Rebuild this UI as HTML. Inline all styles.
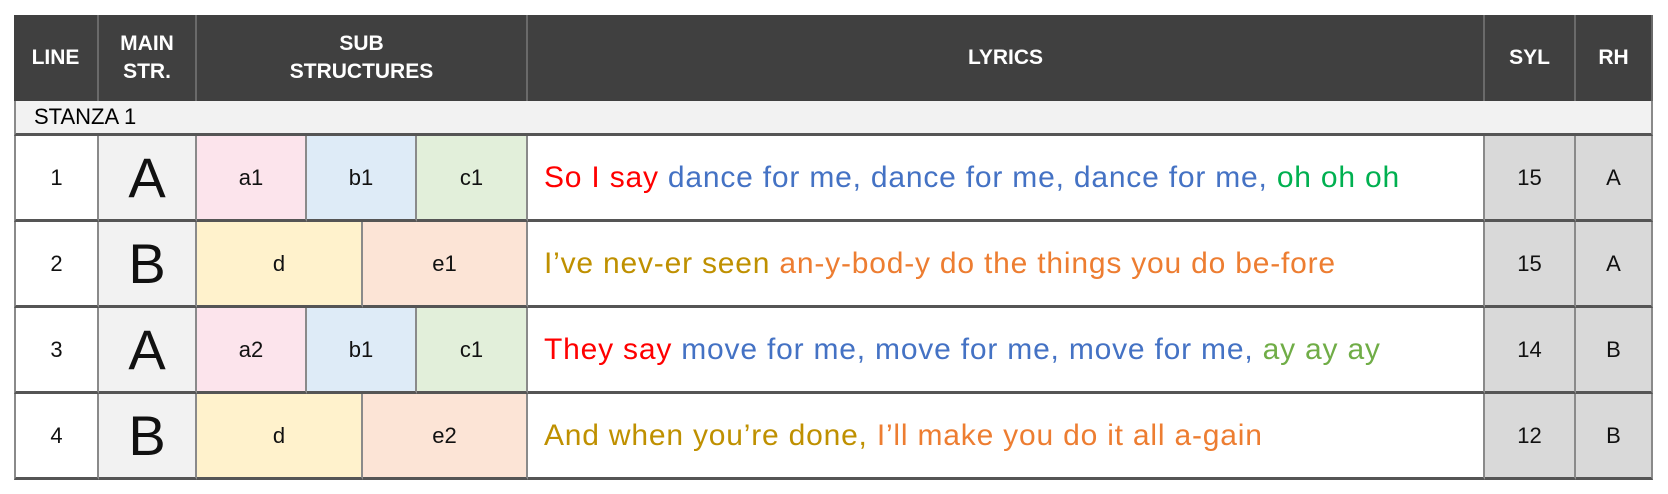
<!DOCTYPE html>
<html><head><meta charset="utf-8"><style>
body{margin:0;width:1668px;height:494px;background:#fff;font-family:"Liberation Sans",sans-serif;position:relative;overflow:hidden}
.c{position:absolute;box-sizing:border-box;display:flex;align-items:center;justify-content:center;text-align:center}
.h{background:#404040;color:#fff;font-weight:bold;font-size:21px;line-height:28px;border-right:2px solid #6a6a6a}
.b{border-right:2px solid #8a8a8a;border-bottom:3px solid #555;font-size:22px;color:#111}
.big{font-size:56px}
.ly{justify-content:flex-start;padding-left:16px;font-size:30px;letter-spacing:0.8px;white-space:pre}
.r{color:#ff0000}.bl{color:#4472c4}.g{color:#00b050}.go{color:#bf9000}.o{color:#ed7d31}.lg{color:#70ad47}
</style></head><body>
<div class="c h" style="left:14px;top:15px;width:85px;height:86px">LINE</div>
<div class="c h" style="left:99px;top:15px;width:98px;height:86px">MAIN<br>STR.</div>
<div class="c h" style="left:197px;top:15px;width:331px;height:86px">SUB<br>STRUCTURES</div>
<div class="c h" style="left:528px;top:15px;width:957px;height:86px">LYRICS</div>
<div class="c h" style="left:1485px;top:15px;width:91px;height:86px">SYL</div>
<div class="c h" style="left:1576px;top:15px;width:77px;height:86px">RH</div>
<div class="c" style="left:14px;top:101px;width:1639px;height:35px;background:#f2f2f2;justify-content:flex-start;padding-left:18px;font-size:22px;border-bottom:3px solid #555;border-left:2px solid #8a8a8a;border-right:2px solid #8a8a8a">STANZA 1</div>

<div class="c b" style="left:14px;top:136px;width:85px;height:86px;border-left:2px solid #8a8a8a">1</div>
<div class="c b big" style="left:99px;top:136px;width:98px;height:86px;background:#f2f2f2">A</div>
<div class="c b" style="left:197px;top:136px;width:110px;height:86px;background:#fce4ec">a1</div>
<div class="c b" style="left:307px;top:136px;width:110px;height:86px;background:#deebf7">b1</div>
<div class="c b" style="left:417px;top:136px;width:111px;height:86px;background:#e2efda">c1</div>
<div class="c b ly" style="left:528px;top:136px;width:957px;height:86px"><span class="r">So I say </span><span class="bl">dance for me, dance for me, dance for me, </span><span class="g">oh oh oh</span></div>
<div class="c b" style="left:1485px;top:136px;width:91px;height:86px;background:#d9d9d9">15</div>
<div class="c b" style="left:1576px;top:136px;width:77px;height:86px;background:#d9d9d9">A</div>

<div class="c b" style="left:14px;top:222px;width:85px;height:86px;border-left:2px solid #8a8a8a">2</div>
<div class="c b big" style="left:99px;top:222px;width:98px;height:86px;background:#f2f2f2">B</div>
<div class="c b" style="left:197px;top:222px;width:166px;height:86px;background:#fff2cc">d</div>
<div class="c b" style="left:363px;top:222px;width:165px;height:86px;background:#fce4d6">e1</div>
<div class="c b ly" style="left:528px;top:222px;width:957px;height:86px"><span class="go">I’ve nev-er seen </span><span class="o">an-y-bod-y do the things you do be-fore</span></div>
<div class="c b" style="left:1485px;top:222px;width:91px;height:86px;background:#d9d9d9">15</div>
<div class="c b" style="left:1576px;top:222px;width:77px;height:86px;background:#d9d9d9">A</div>

<div class="c b" style="left:14px;top:308px;width:85px;height:86px;border-left:2px solid #8a8a8a">3</div>
<div class="c b big" style="left:99px;top:308px;width:98px;height:86px;background:#f2f2f2">A</div>
<div class="c b" style="left:197px;top:308px;width:110px;height:86px;background:#fce4ec">a2</div>
<div class="c b" style="left:307px;top:308px;width:110px;height:86px;background:#deebf7">b1</div>
<div class="c b" style="left:417px;top:308px;width:111px;height:86px;background:#e2efda">c1</div>
<div class="c b ly" style="left:528px;top:308px;width:957px;height:86px"><span class="r">They say </span><span class="bl">move for me, move for me, move for me, </span><span class="lg">ay ay ay</span></div>
<div class="c b" style="left:1485px;top:308px;width:91px;height:86px;background:#d9d9d9">14</div>
<div class="c b" style="left:1576px;top:308px;width:77px;height:86px;background:#d9d9d9">B</div>

<div class="c b" style="left:14px;top:394px;width:85px;height:86px;border-left:2px solid #8a8a8a">4</div>
<div class="c b big" style="left:99px;top:394px;width:98px;height:86px;background:#f2f2f2">B</div>
<div class="c b" style="left:197px;top:394px;width:166px;height:86px;background:#fff2cc">d</div>
<div class="c b" style="left:363px;top:394px;width:165px;height:86px;background:#fce4d6">e2</div>
<div class="c b ly" style="left:528px;top:394px;width:957px;height:86px"><span class="go">And when you’re done, </span><span class="o">I’ll make you do it all a-gain</span></div>
<div class="c b" style="left:1485px;top:394px;width:91px;height:86px;background:#d9d9d9">12</div>
<div class="c b" style="left:1576px;top:394px;width:77px;height:86px;background:#d9d9d9">B</div>
</body></html>
